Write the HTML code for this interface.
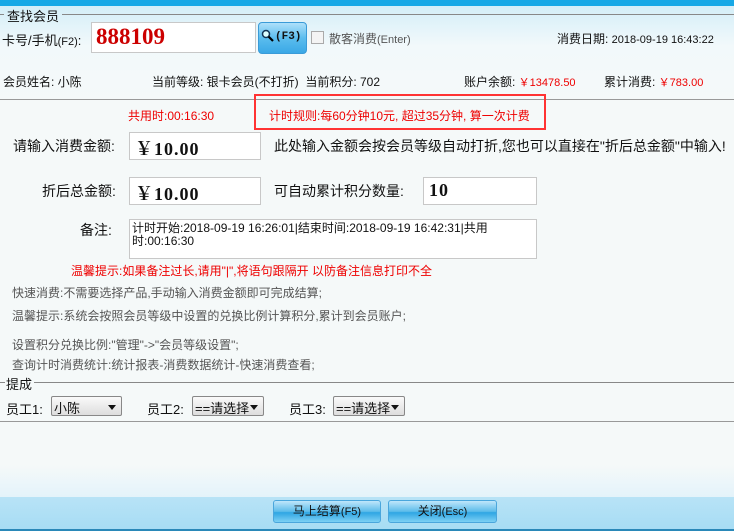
<!DOCTYPE html>
<html><head><meta charset="utf-8"><style>
*{margin:0;padding:0;box-sizing:border-box}
body{width:734px;height:531px;position:relative;overflow:hidden;font-family:"Liberation Sans","Noto Sans CJK SC",sans-serif;font-size:12px;color:#111;background:#f5f9f9}
.a{position:absolute;white-space:nowrap}
.r{color:#e00}
.g{color:#555}
.inp{position:absolute;background:#fff;border:1px solid #c8c8c8;font-family:"Liberation Serif","Noto Serif CJK SC",serif}
.sel{position:absolute;height:20px;border:1px solid #888;border-radius:2px;background:linear-gradient(#fafafa,#ddd);font-size:13px;padding:1px 2px}
.sel:after{content:"";position:absolute;right:5px;top:8px;border:4px solid transparent;border-top:5px solid #111}
.btn{position:absolute;height:23px;border:1px solid #4aa6dc;border-radius:3px;background:linear-gradient(#bfe6fb,#5cbcea 50%,#2ea5e3 55%,#7cd0f4);text-align:center;line-height:21px;font-size:12px}
.v{font-size:18px;font-weight:bold;letter-spacing:1px}
</style></head><body>
<div class="a" style="left:0;top:0;width:734px;height:6px;background:#16a8e6"></div>
<div class="a" style="left:0;top:6px;width:734px;height:94px;background:linear-gradient(#d4eef8,#f2f9fb 40px,#f5f9f9)"></div>
<div class="a" style="left:62px;top:14px;width:672px;height:1px;background:#888"></div>
<div class="a" style="left:0;top:14px;width:4px;height:1px;background:#888"></div>
<div class="a" style="left:7px;top:6px;font-size:13px">查找会员</div>
<div class="a" style="left:2px;top:30px;font-size:13px">卡号/手机<span style="font-size:11px">(F2)</span>:</div>
<div class="inp" style="left:91px;top:22px;width:165px;height:31px;color:#c00;font-size:23px;font-weight:bold;padding:1px 0 0 4px">888109</div>
<div class="a" style="left:258px;top:22px;width:49px;height:32px;border:1px solid #3a9bd8;border-radius:4px;background:linear-gradient(#aee0fa,#5bbdee 50%,#3aa8e6)"></div>
<svg class="a" style="left:261px;top:29px" width="14" height="14"><circle cx="5" cy="5" r="3.5" fill="#dff" stroke="#135" stroke-width="1.5"/><line x1="7.5" y1="7.5" x2="12" y2="12" stroke="#000" stroke-width="2.2"/></svg>
<div class="a" style="left:275px;top:31px;font-size:11px;font-weight:bold;font-family:'Liberation Mono',monospace">(F3)</div>
<div class="a" style="left:311px;top:31px;width:13px;height:13px;border:1px solid #aaa;background:#f4f4f4"></div>
<div class="a g" style="left:329px;top:30px;font-size:12px">散客消费<span style="font-size:11px">(Enter)</span></div>
<div class="a" style="left:557px;top:30px;font-size:12px">消费日期: <span style="font-size:11px">2018-09-19 16:43:22</span></div>
<div class="a" style="left:3px;top:73px">会员姓名: 小陈</div>
<div class="a" style="left:152px;top:73px">当前等级: 银卡会员(不打折)&nbsp; 当前积分: 702</div>
<div class="a" style="left:464px;top:73px">账户余额: <span class="r" style="font-size:11px">￥13478.50</span></div>
<div class="a" style="left:604px;top:73px">累计消费: <span class="r" style="font-size:11px">￥783.00</span></div>
<div class="a" style="left:0;top:99px;width:734px;height:1px;background:#999"></div>
<div class="a r" style="left:128px;top:107px">共用时:00:16:30</div>
<div class="a" style="left:254px;top:94px;width:292px;height:36px;border:2px solid #f33"></div>
<div class="a r" style="left:269px;top:107px">计时规则:每60分钟10元, 超过35分钟, 算一次计费</div>
<div class="a" style="left:13px;top:136px;font-size:14px">请输入消费金额:</div>
<div class="inp v" style="left:129px;top:132px;width:132px;height:28px;padding:2px 0 0 5px">￥10.00</div>
<div class="a" style="left:274px;top:136px;font-size:14px">此处输入金额会按会员等级自动打折,您也可以直接在"折后总金额"中输入!</div>
<div class="a" style="left:42px;top:181px;font-size:14px">折后总金额:</div>
<div class="inp v" style="left:129px;top:177px;width:132px;height:28px;padding:2px 0 0 5px">￥10.00</div>
<div class="a" style="left:274px;top:181px;font-size:14px">可自动累计积分数量:</div>
<div class="inp v" style="left:423px;top:177px;width:114px;height:28px;padding:2px 0 0 5px">10</div>
<div class="a" style="left:80px;top:220px;font-size:14px">备注:</div>
<div class="inp" style="left:129px;top:219px;width:408px;height:40px;font-family:'Liberation Sans','Noto Sans CJK SC',sans-serif;font-size:12px;line-height:13px;padding:2px 0 0 2px;white-space:normal">计时开始:2018-09-19 16:26:01|结束时间:2018-09-19 16:42:31|共用<br>时:00:16:30</div>
<div class="a r" style="left:71px;top:262px">温馨提示:如果备注过长,请用"|",将语句跟隔开 以防备注信息打印不全</div>
<div class="a g" style="left:12px;top:284px">快速消费:不需要选择产品,手动输入消费金额即可完成结算;</div>
<div class="a g" style="left:12px;top:307px">温馨提示:系统会按照会员等级中设置的兑换比例计算积分,累计到会员账户;</div>
<div class="a g" style="left:12px;top:336px">设置积分兑换比例:"管理"->"会员等级设置";</div>
<div class="a g" style="left:12px;top:356px">查询计时消费统计:统计报表-消费数据统计-快速消费查看;</div>
<div class="a" style="left:0;top:382px;width:5px;height:1px;background:#888"></div>
<div class="a" style="left:34px;top:382px;width:700px;height:1px;background:#888"></div>
<div class="a" style="left:6px;top:374px;font-size:13px">提成</div>
<div class="a" style="left:6px;top:399px;font-size:13px">员工1:</div>
<div class="sel" style="left:51px;top:396px;width:71px">小陈</div>
<div class="a" style="left:147px;top:399px;font-size:13px">员工2:</div>
<div class="sel" style="left:192px;top:396px;width:72px">==请选择</div>
<div class="a" style="left:289px;top:399px;font-size:13px">员工3:</div>
<div class="sel" style="left:333px;top:396px;width:72px">==请选择</div>
<div class="a" style="left:0;top:421px;width:734px;height:1px;background:#999"></div>
<div class="a" style="left:0;top:465px;width:734px;height:32px;background:linear-gradient(#f5f9f9,#e4f3fa)"></div>
<div class="a" style="left:0;top:497px;width:734px;height:34px;background:linear-gradient(#b8e3f6,#a6dcf4)"></div>
<div class="a" style="left:0;top:529px;width:734px;height:2px;background:#2a88b8"></div>
<div class="btn" style="left:273px;top:500px;width:108px">马上结算<span style="font-size:11px">(F5)</span></div>
<div class="btn" style="left:388px;top:500px;width:109px">关闭<span style="font-size:11px">(Esc)</span></div>
</body></html>
